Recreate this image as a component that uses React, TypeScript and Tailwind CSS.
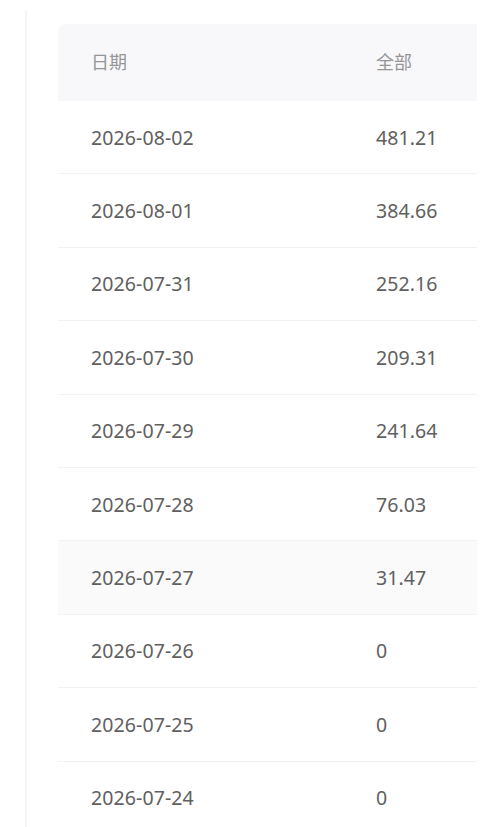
import React from 'react';

interface Row {
  date: string;
  total: string;
}

const rows: Row[] = [
  { date: '2026-08-02', total: '481.21' },
  { date: '2026-08-01', total: '384.66' },
  { date: '2026-07-31', total: '252.16' },
  { date: '2026-07-30', total: '209.31' },
  { date: '2026-07-29', total: '241.64' },
  { date: '2026-07-28', total: '76.03' },
  { date: '2026-07-27', total: '31.47' },
  { date: '2026-07-26', total: '0' },
  { date: '2026-07-25', total: '0' },
  { date: '2026-07-24', total: '0' },
];

// row 7 is the hovered one in the screenshot
const HOVER_INDEX = 6;

export default function App() {
  return (
    <div
      className="flex h-[827px] w-full overflow-hidden bg-white pl-[25px] pt-[10px]"
      style={{ fontFamily: '"Noto Sans", "Noto Sans CJK SC", sans-serif' }}
    >
      <div className="flex-1 border-l-2 border-[#f5f5f5] pl-[31px] pt-[14px]">
        <div className="w-[419px]">
          <div className="grid h-[77px] grid-cols-[285px_1fr] items-center rounded-tl-lg bg-[#f8f8fa] pl-[33px] text-[18px] text-[#959595]">
            <span>日期</span>
            <span>全部</span>
          </div>

          {rows.map((row, i) => (
            <div
              key={row.date}
              className={
                'grid h-[73.4px] grid-cols-[285px_1fr] items-center border-b border-[#f2f2f2] pl-[33px] text-[19.5px] tracking-[0.1px] text-[#606060] ' +
                (i === HOVER_INDEX ? 'bg-[#fafafb]' : 'bg-white')
              }
            >
              <span>{row.date}</span>
              <span>{row.total}</span>
            </div>
          ))}
        </div>
      </div>
    </div>
  );
}
